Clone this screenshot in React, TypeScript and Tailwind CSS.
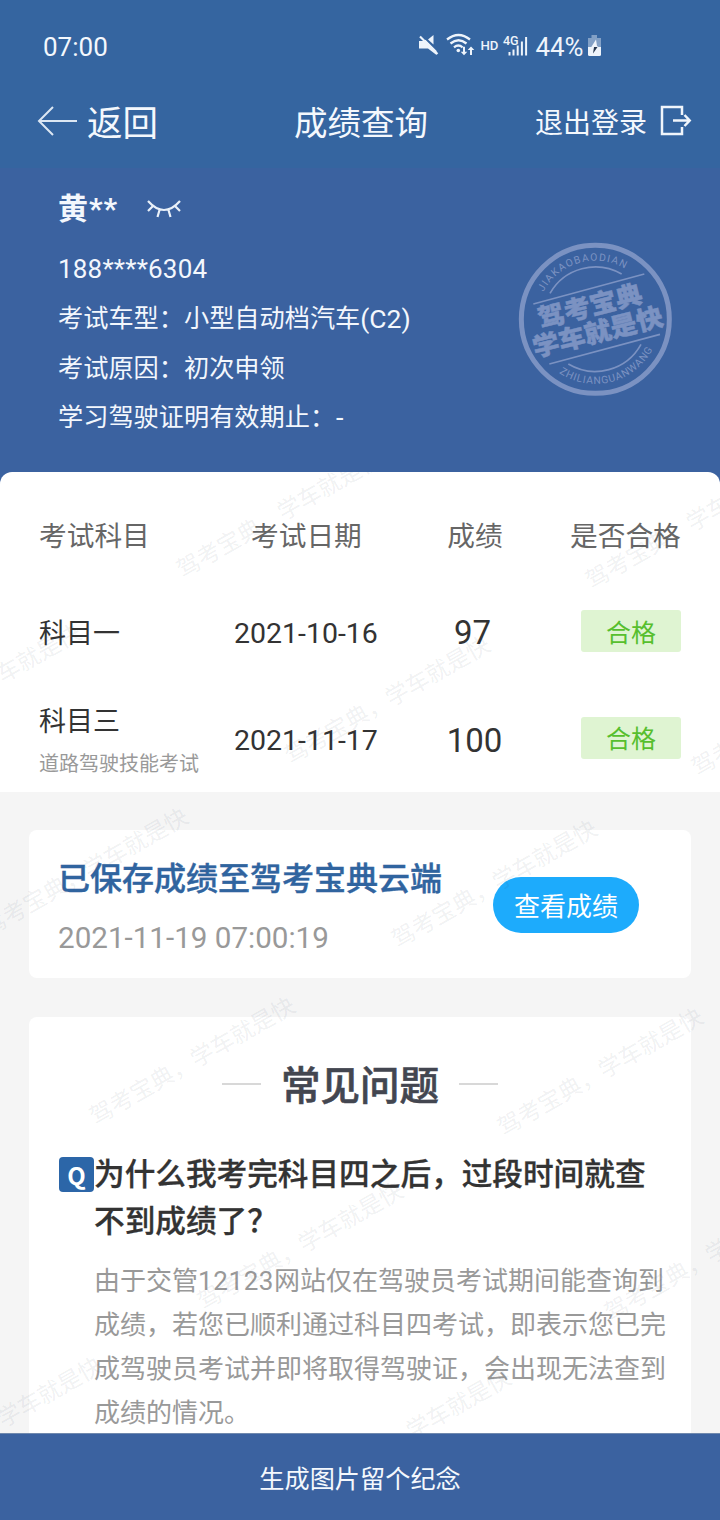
import React from "react";

const watermarks = [
  [187, 565], [596, 576], [-114, 739], [295, 751], [702, 763], [-7, 923], [402, 935],
  [100, 1112], [508, 1123], [208, 1297], [615, 1308], [-93, 1472], [316, 1484],
];

function Watermarks() {
  return (
    <svg className="pointer-events-none absolute inset-0" width="720" height="961" viewBox="0 472 720 961" aria-hidden="true">
      {watermarks.map(([x, y]) => (
        <text
          key={`${x}-${y}`}
          transform={`translate(${x} ${y}) rotate(-29.7)`}
          x="-10.5"
          y="9.5"
          fontSize="23.2"
          fill="#30405a"
          fillOpacity="0.085"
        >
          驾考宝典，学车就是快
        </text>
      ))}
    </svg>
  );
}

function StatusIcons() {
  return (
    <svg width="190" height="30" viewBox="414 31 190 30" fill="#eef4fb">
      <path d="M419 41h5l1.5-1.200 11 11V55l-8.500-6.500-2 0H419zM428 39.500l5.500-4.500v9.500z" />
      <path d="M420 36.500l17.500 17.500" stroke="#eef4fb" strokeWidth="2.200" />
      <g fill="none" stroke="#eef4fb" strokeWidth="2.300">
        <path d="M447 39.500q11.500-9 23 0" />
        <path d="M450.500 43.500q8-6.500 16 0" />
        <path d="M454 47.300q4.300-3.500 8.600 0" />
      </g>
      <circle cx="458.300" cy="50.500" r="1.800" />
      <path d="M463 46.800h2v5h2.300L464 55.200l-3.300-3.400h2.300zM470 55h2v-5h2.300L471 46.600l-3.300 3.400h2.300z" />
      <text x="480.500" y="50" fontSize="12.500" fontWeight="500" textLength="18" lengthAdjust="spacingAndGlyphs">HD</text>
      <text x="503" y="44.500" fontSize="12.500" fontWeight="500">4G</text>
      <path d="M508.500 52h2v3.500h-2zM512.500 49.500h2v6h-2zM516.700 45.500h2v10h-2zM520.900 41.500h2v14h-2zM525.100 37h2v18.500h-2z" />
      <text x="535.500" y="55.500" fontSize="26" textLength="48" lengthAdjust="spacingAndGlyphs">44%</text>
      <path d="M588 38h3.500v-3h5.500v3h4v9h-13z" opacity=".42" />
      <path d="M588 47h13v7.500q0 1.500-1.500 1.500h-10q-1.500 0-1.500-1.500z" />
      <path d="M596 39.500l-5 8h4V47h3.500l-1.500-1z" />
      <path d="M594 47h3.500l-4.500 6.500z" fill="#26374f" />
    </svg>
  );
}

function Stamp() {
  return (
    <svg className="shrink-0" width="190" height="180" viewBox="0 0 570 540">
      <defs>
        <path id="stampTop" d="M110 268A176 176 0 0 1 462 268" />
        <path id="stampBottom" d="M92 268A194 194 0 0 0 480 268" />
      </defs>
      <g fill="none" stroke="#7b92c2">
        <circle cx="286" cy="268" r="222" strokeWidth="15" />
        <g strokeWidth="5">
          <path d="M150 190A157 157 0 0 1 365 132M205 402A157 157 0 0 0 423 343" />
          <path d="M100 222L433 132M148 402L480 313" />
        </g>
      </g>
      <g fill="#7b92c2">
        <text fontSize="31" textLength="284">
          <textPath href="#stampTop" startOffset="85">JIAKAOBAODIAN</textPath>
        </text>
        <text fontSize="31">
          <textPath href="#stampBottom" startOffset="189" textLength="326">ZHILIANGUANWANG</textPath>
        </text>
        <g fontWeight="900" textAnchor="middle" stroke="#7b92c2" strokeWidth="1.500">
          <text transform="translate(270 228) rotate(-14) scale(1 .96)" y="29" fontSize="80">驾考宝典</text>
          <text transform="translate(293 306) rotate(-14) scale(1 .96)" y="29" fontSize="80">学车就是快</text>
        </g>
      </g>
    </svg>
  );
}

function Passed() {
  return (
    <span className="-mt-[2px] flex h-[42px] w-[100px] items-center justify-center rounded-[3px] bg-[#dff4d2] pt-[4px] text-[25px] text-[#57bf2e]">
      合格
    </span>
  );
}

export default function App() {
  return (
    <div className="flex h-[1520px] w-[720px] flex-col overflow-hidden bg-[#f5f5f5] font-[Roboto,'Noto_Sans_CJK_SC',sans-serif] leading-none">
      <header className="h-[168px] shrink-0 bg-[#3565a0] text-[#f4f8fd]">
        <div className="flex h-[92px] items-center pl-[43px]">
          <span className="w-[371px] pt-px text-[26px]">07:00</span>
          <StatusIcons />
        </div>
        <nav className="grid h-[60px] grid-cols-[1fr_auto_1fr] items-center pr-[28px] pl-[36px]">
          <div className="flex items-center pl-px text-[35.500px]">
            <svg className="-mt-px" width="50" height="32" viewBox="0 0 50 32" fill="none" stroke="#dce7f3" strokeWidth="2">
              <path d="M16 1L2 15l14 14M2 15h38" />
            </svg>
            <span className="pt-[5px] whitespace-nowrap">返回</span>
          </div>
          <h1 className="-ml-[6px] pt-[4px] text-[33.500px] whitespace-nowrap">成绩查询</h1>
          <div className="flex items-center justify-end gap-[13px] text-[28px]">
            <span className="pt-[3px] whitespace-nowrap">退出登录</span>
            <svg className="-mt-[2px]" width="32" height="32" viewBox="0 0 32 32" fill="none" stroke="#f0f5fb" strokeWidth="2.500">
              <path d="M22 10V2H2v27h20v-7M13 15.500h16M24.500 10l5.200 5.500-5.200 5.500" />
            </svg>
          </div>
        </nav>
      </header>

      <section className="flex h-[304px] shrink-0 justify-between bg-[#3b62a0] pr-[30px] pl-[58px] text-[#f3f7fd]">
        <div className="flex flex-col pt-[16px] text-[25.200px]">
          <div className="flex h-[48px] items-center gap-[28px] pt-[2px] text-[30px] font-bold">
            <span className="tracking-[1px]">黄**</span>
            <svg width="36" height="22" viewBox="0 0 36 22" fill="none" stroke="#e9f0f9" strokeWidth="2.200">
              <path d="M2 3q16 18 32 0M7 8l-5 5M13.500 12l-2 7M22.500 12l2 7M29 8l5 5" />
            </svg>
          </div>
          <p className="flex h-[73px] items-center text-[26px] tracking-[0.200px]">188****6304</p>
          <p className="-mt-[11px] flex h-[50px] items-center">
            考试车型：小型自动档汽车<span className="text-[26.500px]">(C2)</span>
          </p>
          <p className="flex h-[49px] items-center">考试原因：初次申领</p>
          <p className="flex h-[50px] items-center">
            学习驾驶证明有效期止：<span className="pl-px text-[27px]">-</span>
          </p>
        </div>
        <div className="pt-[62px]">
          <Stamp />
        </div>
      </section>

      <main className="relative h-[961px] shrink-0 overflow-hidden">
        <div className="bg-[#3b62a0]">
          <section className="h-[320px] rounded-t-[12px] bg-white text-[#333]">
            <div className="grid h-[107px] grid-cols-[195px_144px_194px_100px] items-center pt-[23px] pl-[39px] text-[27.700px] text-[#666]">
              <span>考试科目</span>
              <span className="pl-[17px] whitespace-nowrap">考试日期</span>
              <span className="text-center">成绩</span>
              <span className="-ml-[2px] whitespace-nowrap">是否合格</span>
            </div>
            <div className="grid h-[106px] grid-cols-[195px_144px_203px_100px] items-center pl-[39px]">
              <span className="pt-[4px] text-[27px]">科目一</span>
              <span className="pt-[4px] text-[28.500px]">2021-10-16</span>
              <span className="pr-[14px] pt-px text-center text-[33px]">97</span>
              <Passed />
            </div>
            <div className="grid h-[107px] grid-cols-[195px_144px_203px_100px] items-center pl-[39px]">
              <div className="pt-[6px]">
                <p className="text-[27px]">科目三</p>
                <p className="mt-[18px] text-[20px] text-[#999]">道路驾驶技能考试</p>
              </div>
              <span className="pt-[5px] text-[28.500px]">2021-11-17</span>
              <span className="pr-[10px] pt-[3px] text-center text-[33px]">100</span>
              <Passed />
            </div>
          </section>
        </div>

        <div className="flex flex-col gap-[39px] pt-[38px] pr-[29px] pl-[29px]">
          <section className="flex h-[148px] items-center justify-between rounded-[8px] bg-white pr-[52px] pl-[29px]">
            <div className="pt-[8px]">
              <h2 className="text-[32px] font-medium text-[#30649f] [-webkit-text-stroke:0.4px_#30649f]">已保存成绩至驾考宝典云端</h2>
              <p className="mt-[29px] text-[29.600px] text-[#999]">2021-11-19 07:00:19</p>
            </div>
            <button className="mt-[2px] h-[56px] w-[146px] rounded-full bg-[#1dabfc] pt-[3px] text-[26px] text-white">查看成绩</button>
          </section>

          <section className="h-[420px] rounded-t-[8px] bg-white">
            <div className="flex h-[116px] items-center justify-center gap-[20px] pt-[18px]">
              <span className="h-[2px] w-[39px] bg-[#d8d8d8]" />
              <h2 className="pt-[5px] text-[39.500px] font-medium text-[#434650] [-webkit-text-stroke:0.6px_#434650]">常见问题</h2>
              <span className="h-[2px] w-[39px] bg-[#d8d8d8]" />
            </div>
            <div className="flex pt-[18px] pl-[30px]">
              <span className="mt-[6px] flex size-[35px] shrink-0 items-center justify-center rounded-[4px] bg-[#2c66a8] pt-px font-['Noto_Sans_CJK_SC',sans-serif] text-[24px] font-bold text-white">
                Q
              </span>
              <div className="w-[580px]">
                <h3 className="text-[30.650px] leading-[47px] font-medium text-[#333] [-webkit-text-stroke:0.3px_#333]">
                  为什么我考完科目四之后，过段时间就查
                  <br />
                  不到成绩了？
                </h3>
                <p className="mt-[14px] text-[26px] leading-[44px] whitespace-nowrap text-[#999]">
                  由于交管<span className="tracking-[0.600px]">12123</span>网站仅在驾驶员考试期间能查询到
                  <br />
                  成绩，若您已顺利通过科目四考试，即表示您已完
                  <br />
                  成驾驶员考试并即将取得驾驶证，会出现无法查到
                  <br />
                  成绩的情况。
                </p>
              </div>
            </div>
          </section>
        </div>
        <Watermarks />
      </main>

      <footer className="flex h-[87px] shrink-0 items-center justify-center border-t border-[#7089ae] bg-[#3b62a0] pt-[5px] text-[25.200px] text-[#f4f8fd]">
        生成图片留个纪念
      </footer>
    </div>
  );
}
